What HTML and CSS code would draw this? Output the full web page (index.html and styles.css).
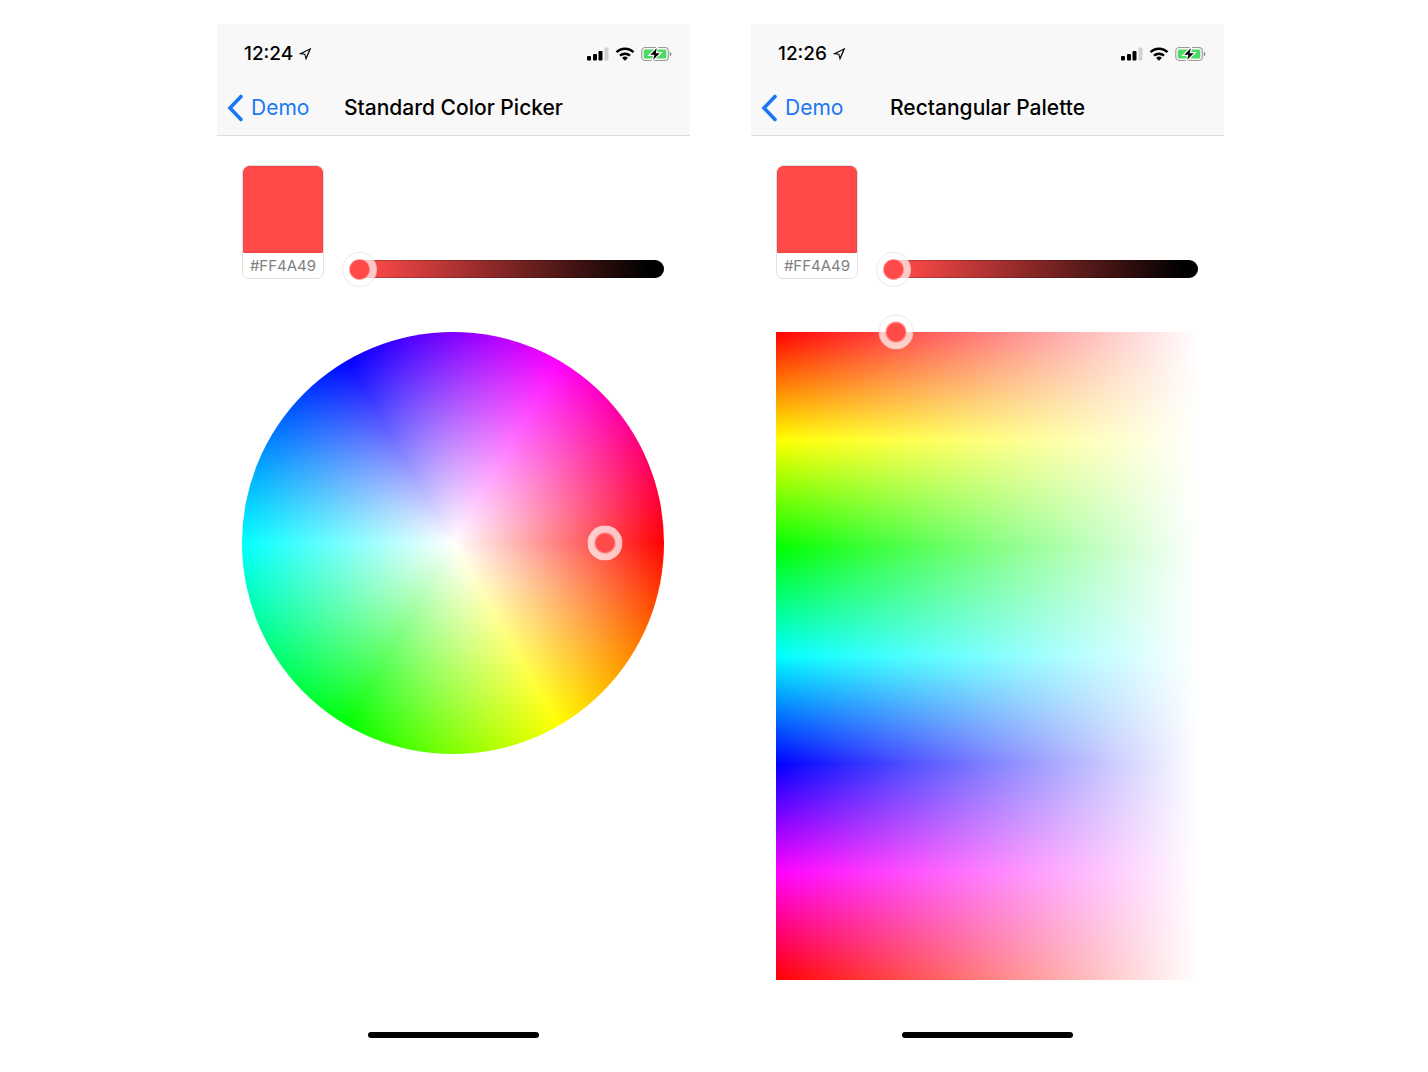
FILE: index.html
```html
<!DOCTYPE html>
<html lang="en">
<head>
<meta charset="utf-8">
<title>Color Picker Demo</title>
<link rel="stylesheet" href="styles.css">
</head>
<body>
<svg class="sprite" aria-hidden="true">
  <symbol id="location" viewBox="0 0 14 14"><path fill-rule="evenodd" d="M13.4.8.6 6.9 6.4 7.7 7.9 13.4zM11 3 8 10 7.3 6.8 4.4 6.4z"/></symbol>
  <symbol id="signal" viewBox="0 0 22 14"><rect x="0" y="9" width="4" height="4.5" rx="1"/><rect x="6" y="7" width="4" height="6.5" rx="1"/><rect x="11.5" y="4" width="4" height="9.5" rx="1"/><rect x="17.5" y="0.5" width="4" height="13" rx="1" fill="#d0d0d0"/></symbol>
  <symbol id="wifi" viewBox="0 0 20 14"><g fill="none" stroke="currentColor" stroke-width="2.5"><path d="M1.5 5.2a12 12 0 0 1 17 0"/><path d="M5 8.7a7.2 7.2 0 0 1 10 0"/></g><path d="M10 13.7 7.1 10.9a4.2 4.2 0 0 1 5.8 0z"/></symbol>
  <symbol id="battery" viewBox="0 0 31 16"><rect x="0.8" y="1.5" width="26.5" height="13" rx="3.5" fill="none" stroke="#999" stroke-width="1.1"/><path d="M28.8 5.8a2.3 2.3 0 0 1 0 4.4z" fill="#888"/><rect x="2.8" y="3.5" width="22.5" height="9" rx="1.5" fill="#4cd964"/><path d="M15.7 2.3 9.4 8.8h4L12.2 13.7l6.5-6.5h-4z" stroke="#f8f8f8" stroke-width="2.6"/><path d="M15.7 2.3 9.4 8.8h4L12.2 13.7l6.5-6.5h-4z"/></symbol>
  <symbol id="back" viewBox="0 0 16 28"><path d="M14 2.5 3 14 14 25.5" fill="none" stroke="currentColor" stroke-width="3.6" stroke-linecap="round"/></symbol>
</svg>
<div class="page">
  <section class="phone">
    <header class="header">
      <div class="status">
        <span class="clock">12:24</span>
        <svg class="icon-location"><use href="#location"/></svg>
        <div class="status-icons">
          <svg class="icon-signal"><use href="#signal"/></svg>
          <svg class="icon-wifi"><use href="#wifi"/></svg>
          <svg class="icon-battery"><use href="#battery"/></svg>
        </div>
      </div>
      <nav class="nav">
        <a class="back" href="#"><svg class="icon-back"><use href="#back"/></svg>Demo</a>
        <h1 class="title">Standard Color Picker</h1>
      </nav>
    </header>
    <main class="content">
      <div class="controls">
        <div class="swatch"><div class="swatch-color"></div><span class="swatch-code">#FF4A49</span></div>
        <input class="brightness" type="range" min="0" max="100" value="0" aria-label="Brightness">
      </div>
      <div class="palette wheel"><button class="handle" type="button" aria-label="Selected color"></button></div>
    </main>
    <div class="home-bar"></div>
  </section>
  <section class="phone">
    <header class="header">
      <div class="status">
        <span class="clock">12:26</span>
        <svg class="icon-location"><use href="#location"/></svg>
        <div class="status-icons">
          <svg class="icon-signal"><use href="#signal"/></svg>
          <svg class="icon-wifi"><use href="#wifi"/></svg>
          <svg class="icon-battery"><use href="#battery"/></svg>
        </div>
      </div>
      <nav class="nav">
        <a class="back" href="#"><svg class="icon-back"><use href="#back"/></svg>Demo</a>
        <h1 class="title">Rectangular Palette</h1>
      </nav>
    </header>
    <main class="content">
      <div class="controls">
        <div class="swatch"><div class="swatch-color"></div><span class="swatch-code">#FF4A49</span></div>
        <input class="brightness" type="range" min="0" max="100" value="0" aria-label="Brightness">
      </div>
      <div class="palette rectangle"><button class="handle" type="button" aria-label="Selected color"></button></div>
    </main>
    <div class="home-bar"></div>
  </section>
</div>
</body>
</html>
```

FILE: styles.css
```css
* { box-sizing: border-box; }
body {
  margin: 0;
  background: #fff;
  color: #000;
  font-family: Inter, "Liberation Sans", sans-serif;
}
.sprite { display: none; }
.page {
  display: grid;
  grid-template-columns: 1fr 1fr;
  gap: 61px;
  padding: 24px 204px 24px 217px;
}
.phone {
  display: flex;
  flex-direction: column;
  aspect-ratio: 473 / 1024;
  padding-bottom: 10px;
}
.header {
  background: #f8f8f8;
  border-bottom: 1px solid #dcdcdc;
}
.status {
  display: flex;
  align-items: center;
  height: 56px;
  padding: 4px 18px 0 27px;
}
.clock {
  font-size: 19px;
  font-weight: 500;
  line-height: 24px;
}
.icon-location { width: 14px; height: 14px; margin-left: 5px; }
.status-icons {
  display: flex;
  align-items: center;
  gap: 6px;
  margin-left: auto;
}
.icon-signal { width: 22px; height: 14px; }
.icon-wifi { width: 20px; height: 14px; }
.icon-battery { width: 31px; height: 16px; }
.nav {
  display: grid;
  grid-template-columns: 1fr auto 1fr;
  align-items: center;
  height: 55px;
  padding: 0 10px;
}
.back {
  display: flex;
  align-items: center;
  gap: 8px;
  color: #1a78f5;
  font-size: 21px;
  line-height: 28px;
  text-decoration: none;
}
.icon-back { width: 16px; height: 28px; }
.title {
  margin: 0;
  font-size: 21px;
  font-weight: 500;
  line-height: 28px;
}
.content {
  display: flex;
  flex: 1;
  flex-direction: column;
  gap: 53px;
  padding: 29px 26px 52px 25px;
}
.controls {
  display: flex;
  align-items: flex-end;
  gap: 26px;
}
.swatch {
  width: 82px;
  overflow: hidden;
  border: 1px solid #e2e2e2;
  border-radius: 7px;
  text-align: center;
}
.swatch-color {
  height: 87px;
  background: #ff4a49;
  border: 1px solid #f04445;
  border-radius: 6px 6px 0 0;
}
.swatch-code {
  display: block;
  color: #808080;
  font-size: 15px;
  line-height: 25px;
}
.brightness {
  flex: 1;
  min-width: 0;
  height: 18px;
  margin: 0 0 1px;
  appearance: none;
  background: linear-gradient(to right, #ff4a49 5%, #000 95%);
  border-radius: 9px;
  box-shadow: inset 0 0 0 1px rgb(0 0 0 / 20%);
}
.brightness::-webkit-slider-thumb {
  appearance: none;
  width: 35px;
  height: 35px;
  margin-left: -8px;
  background: radial-gradient(circle, #ff4a49 9px, rgb(255 255 255 / 70%) 11px);
  border: 1px solid rgb(0 0 0 / 8%);
  border-radius: 50%;
}
.palette { position: relative; }
.wheel {
  aspect-ratio: 1;
  border-radius: 50%;
  background:
    radial-gradient(closest-side, #fff, rgb(255 255 255 / 0%)),
    conic-gradient(from 90deg, #f00, #ff0, #0f0, #0ff, #00f, #f0f, #f00);
}
.rectangle {
  flex: 1;
  background:
    linear-gradient(to right, rgb(255 255 255 / 0%), #fff),
    linear-gradient(#f00, #ff0, #0f0, #0ff, #00f, #f0f, #f00);
}
.handle {
  position: absolute;
  width: 35px;
  height: 35px;
  padding: 0;
  background: radial-gradient(circle, #ff4a49 9px, rgb(255 255 255 / 70%) 11px);
  border: 1px solid rgb(0 0 0 / 8%);
  border-radius: 50%;
  transform: translate(-50%, -50%);
}
.wheel .handle { top: 50%; left: 86%; border-color: transparent; }
.rectangle .handle { top: 0; left: 28.5%; }
.home-bar {
  align-self: center;
  width: 36%;
  height: 6px;
  background: #000;
  border-radius: 3px;
}
```
